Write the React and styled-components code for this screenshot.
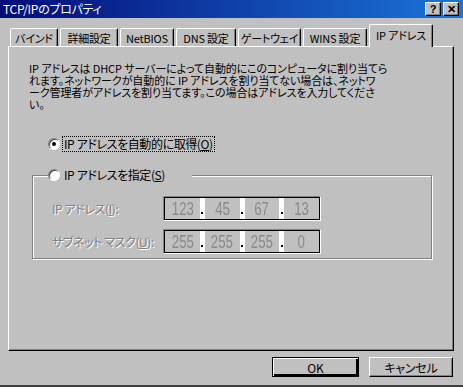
import React from 'react'
import styled, { createGlobalStyle } from 'styled-components'

const GlobalStyle = createGlobalStyle`
    html, body {
        margin: 0;
        padding: 0;
        background: #c0c0c0;
    }
    body {
        font-family: "Noto Sans CJK JP", "Liberation Sans", sans-serif;
    }
`

const Window = styled.div`
    width: 463px;
    height: 387px;
    box-sizing: border-box;
    background: #c0c0c0;
    border-bottom: 2px solid #404040;
    display: flex;
    flex-direction: column;
    font-size: 12px;
    font-feature-settings: "palt";
    color: #000;
`

const TitleBar = styled.div`
    height: 18px;
    display: flex;
    align-items: center;
    background: linear-gradient(to right, #020c78, #1c74d8);
`

const TitleText = styled.div`
    color: #fff;
    padding-left: 3px;
    font-size: 12px;
    line-height: 18px;
    letter-spacing: -0.3px;
`

const TitleButtons = styled.div`
    margin-left: auto;
    margin-right: 4px;
    display: flex;
    gap: 2px;
`

const TitleButton = styled.div`
    width: 16px;
    height: 14px;
    box-sizing: border-box;
    background: #c0c0c0;
    border: 1px solid;
    border-color: #fff #000 #000 #fff;
    box-shadow: inset -1px -1px #808080;
    display: flex;
    align-items: center;
    justify-content: center;
    font-family: "Liberation Sans", sans-serif;
    font-weight: bold;
    font-size: 11px;
    line-height: 1;
`

const TabRow = styled.div`
    margin-top: 6px;
    height: 22px;
    padding-left: 10px;
    display: flex;
    align-items: flex-end;
    gap: 2px;
`

const Tab = styled.div`
    position: relative;
    z-index: ${p => (p.$active ? 2 : 0)};
    width: ${p => p.$w}px;
    height: ${p => (p.$active ? 23 : 18)}px;
    margin-bottom: ${p => (p.$active ? -1 : 0)}px;
    box-sizing: border-box;
    background: #c0c0c0;
    border: 1px solid;
    border-bottom: none;
    border-color: #fff #000 transparent #fff;
    border-radius: 2px 2px 0 0;
    box-shadow: inset -1px 0 #808080;
    display: flex;
    align-items: ${p => (p.$active ? 'flex-start' : 'center')};
    padding-top: ${p => (p.$active ? 2 : 0)}px;
    justify-content: center;
    white-space: nowrap;
    font-size: 11px;
    letter-spacing: -0.2px;
`

const Panel = styled.div`
    margin-left: 8px;
    width: 446px;
    height: 305px;
    box-sizing: border-box;
    border: 1px solid;
    border-color: #fff #000 #000 #fff;
    box-shadow: inset -1px -1px #808080;
    padding: 15px 0 0 20px;
    display: flex;
    flex-direction: column;
    align-items: flex-start;
`

const Description = styled.p`
    margin: 0;
    font-size: 11px;
    line-height: 12px;
    letter-spacing: -0.1px;
    white-space: nowrap;
`

const RadioRow = styled.div`
    margin: 26px 0 0 19px;
    display: flex;
    align-items: center;
    height: 16px;
`

const Radio = styled.span`
    width: 12px;
    height: 12px;
    box-sizing: border-box;
    border-radius: 50%;
    background: #fff;
    border: 1px solid;
    border-color: #808080 #fff #fff #808080;
    box-shadow: inset 1px 1px #404040;
    display: flex;
    align-items: center;
    justify-content: center;
    flex-shrink: 0;

    &::after {
        content: "";
        width: 4px;
        height: 4px;
        border-radius: 50%;
        background: #000;
        display: ${p => (p.$checked ? 'block' : 'none')};
    }
`

const RadioLabel = styled.span`
    margin-left: 3px;
    padding: 0 1px;
    line-height: 14px;
    outline: ${p => (p.$focus ? '1px dotted #000' : 'none')};
    letter-spacing: -0.4px;
    white-space: nowrap;
`

const Key = styled.span`
    text-decoration: underline;
`

const GroupBox = styled.fieldset`
    margin: 15px 0 0 3px;
    width: 400px;
    box-sizing: border-box;
    padding: 13px 0 4px 19px;
    border: 1px solid #808080;
    box-shadow: 1px 1px 0 #fff, inset 1px 1px 0 #fff;
    display: flex;
    flex-direction: column;
    gap: 8px;
`

const Legend = styled.legend`
    margin-left: -4px;
    padding: 0 26px 0 0;
    background: #c0c0c0;
    display: flex;
    align-items: center;
    height: 16px;
`

const FieldRow = styled.div`
    display: flex;
    align-items: center;
    height: 25px;
`

const FieldLabel = styled.span`
    width: 111px;
    color: #808080;
    text-shadow: 1px 1px 0 #fff;
    letter-spacing: -0.4px;
    white-space: nowrap;
`

const IpField = styled.div`
    width: 158px;
    height: 25px;
    box-sizing: border-box;
    border: 1px solid;
    border-color: #808080 #fff #fff #808080;
    padding: 1px;
    box-shadow: inset 0 0 0 1px #000;
    display: flex;
`

const Segment = styled.div`
    flex: 1;
    background: #c0c0c0;
    color: #8a8a8a;
    font-family: "Liberation Sans", sans-serif;
    font-size: 19px;
    display: flex;
    align-items: center;
    justify-content: center;
`

const Digits = styled.span`
    display: inline-block;
    transform: scaleX(0.7);
`

const Dot = styled.div`
    width: 5px;
    background: #fff;
    display: flex;
    align-items: flex-end;
    justify-content: center;

    &::after {
        content: "";
        width: 2px;
        height: 2px;
        margin-bottom: 5px;
        background: #000;
    }
`

const ButtonRow = styled.div`
    margin-top: 6px;
    padding-right: 10px;
    display: flex;
    justify-content: flex-end;
    gap: 10px;
`

const Button = styled.div`
    width: ${p => p.$w}px;
    height: 20px;
    box-sizing: border-box;
    background: #c0c0c0;
    border: 1px solid;
    border-color: ${p => (p.$default ? '#000' : '#fff #000 #000 #fff')};
    box-shadow: ${p => (p.$default
        ? 'inset 1px 1px #fff, inset -2px -2px #000'
        : 'inset -1px -1px #808080')};
    display: flex;
    align-items: center;
    justify-content: center;
    letter-spacing: -0.2px;
`

const ipAddress = ['123', '45', '67', '13']
const subnet = ['255', '255', '255', '0']

const tabs = [
    { label: 'バインド', w: 48 },
    { label: '詳細設定', w: 58 },
    { label: 'NetBIOS', w: 54 },
    { label: 'DNS 設定', w: 60 },
    { label: 'ゲートウェイ', w: 63 },
    { label: 'WINS 設定', w: 64 },
    { label: 'IP アドレス', w: 64, active: true },
]

const IpInput = ({ parts }) => (
    <IpField>
        {parts.map((p, i) => (
            <React.Fragment key={i}>
                {i > 0 && <Dot />}
                <Segment><Digits>{p}</Digits></Segment>
            </React.Fragment>
        ))}
    </IpField>
)

const App = () => (
    <Window>
        <GlobalStyle />
        <TitleBar>
            <TitleText>TCP/IPのプロパティ</TitleText>
            <TitleButtons>
                <TitleButton>?</TitleButton>
                <TitleButton>✕</TitleButton>
            </TitleButtons>
        </TitleBar>

        <TabRow>
            {tabs.map(t => (
                <Tab key={t.label} $w={t.w} $active={t.active}>{t.label}</Tab>
            ))}
        </TabRow>

        <Panel>
            <Description>
                IP アドレスは DHCP サーバーによって自動的にこのコンピュータに割り当てら<br />
                れます。ネットワークが自動的に IP アドレスを割り当てない場合は、ネットワ<br />
                ーク管理者がアドレスを割り当てます。この場合はアドレスを入力してくださ<br />
                い。
            </Description>

            <RadioRow>
                <Radio $checked />
                <RadioLabel $focus>IP アドレスを自動的に取得(<Key>O</Key>)</RadioLabel>
            </RadioRow>

            <GroupBox>
                <Legend>
                    <Radio />
                    <RadioLabel>IP アドレスを指定(<Key>S</Key>)</RadioLabel>
                </Legend>
                <FieldRow>
                    <FieldLabel>IP アドレス(<Key>I</Key>):</FieldLabel>
                    <IpInput parts={ipAddress} />
                </FieldRow>
                <FieldRow>
                    <FieldLabel>サブネット マスク(<Key>U</Key>):</FieldLabel>
                    <IpInput parts={subnet} />
                </FieldRow>
            </GroupBox>
        </Panel>

        <ButtonRow>
            <Button $w={87} $default>OK</Button>
            <Button $w={84}>キャンセル</Button>
        </ButtonRow>
    </Window>
)

export default App
